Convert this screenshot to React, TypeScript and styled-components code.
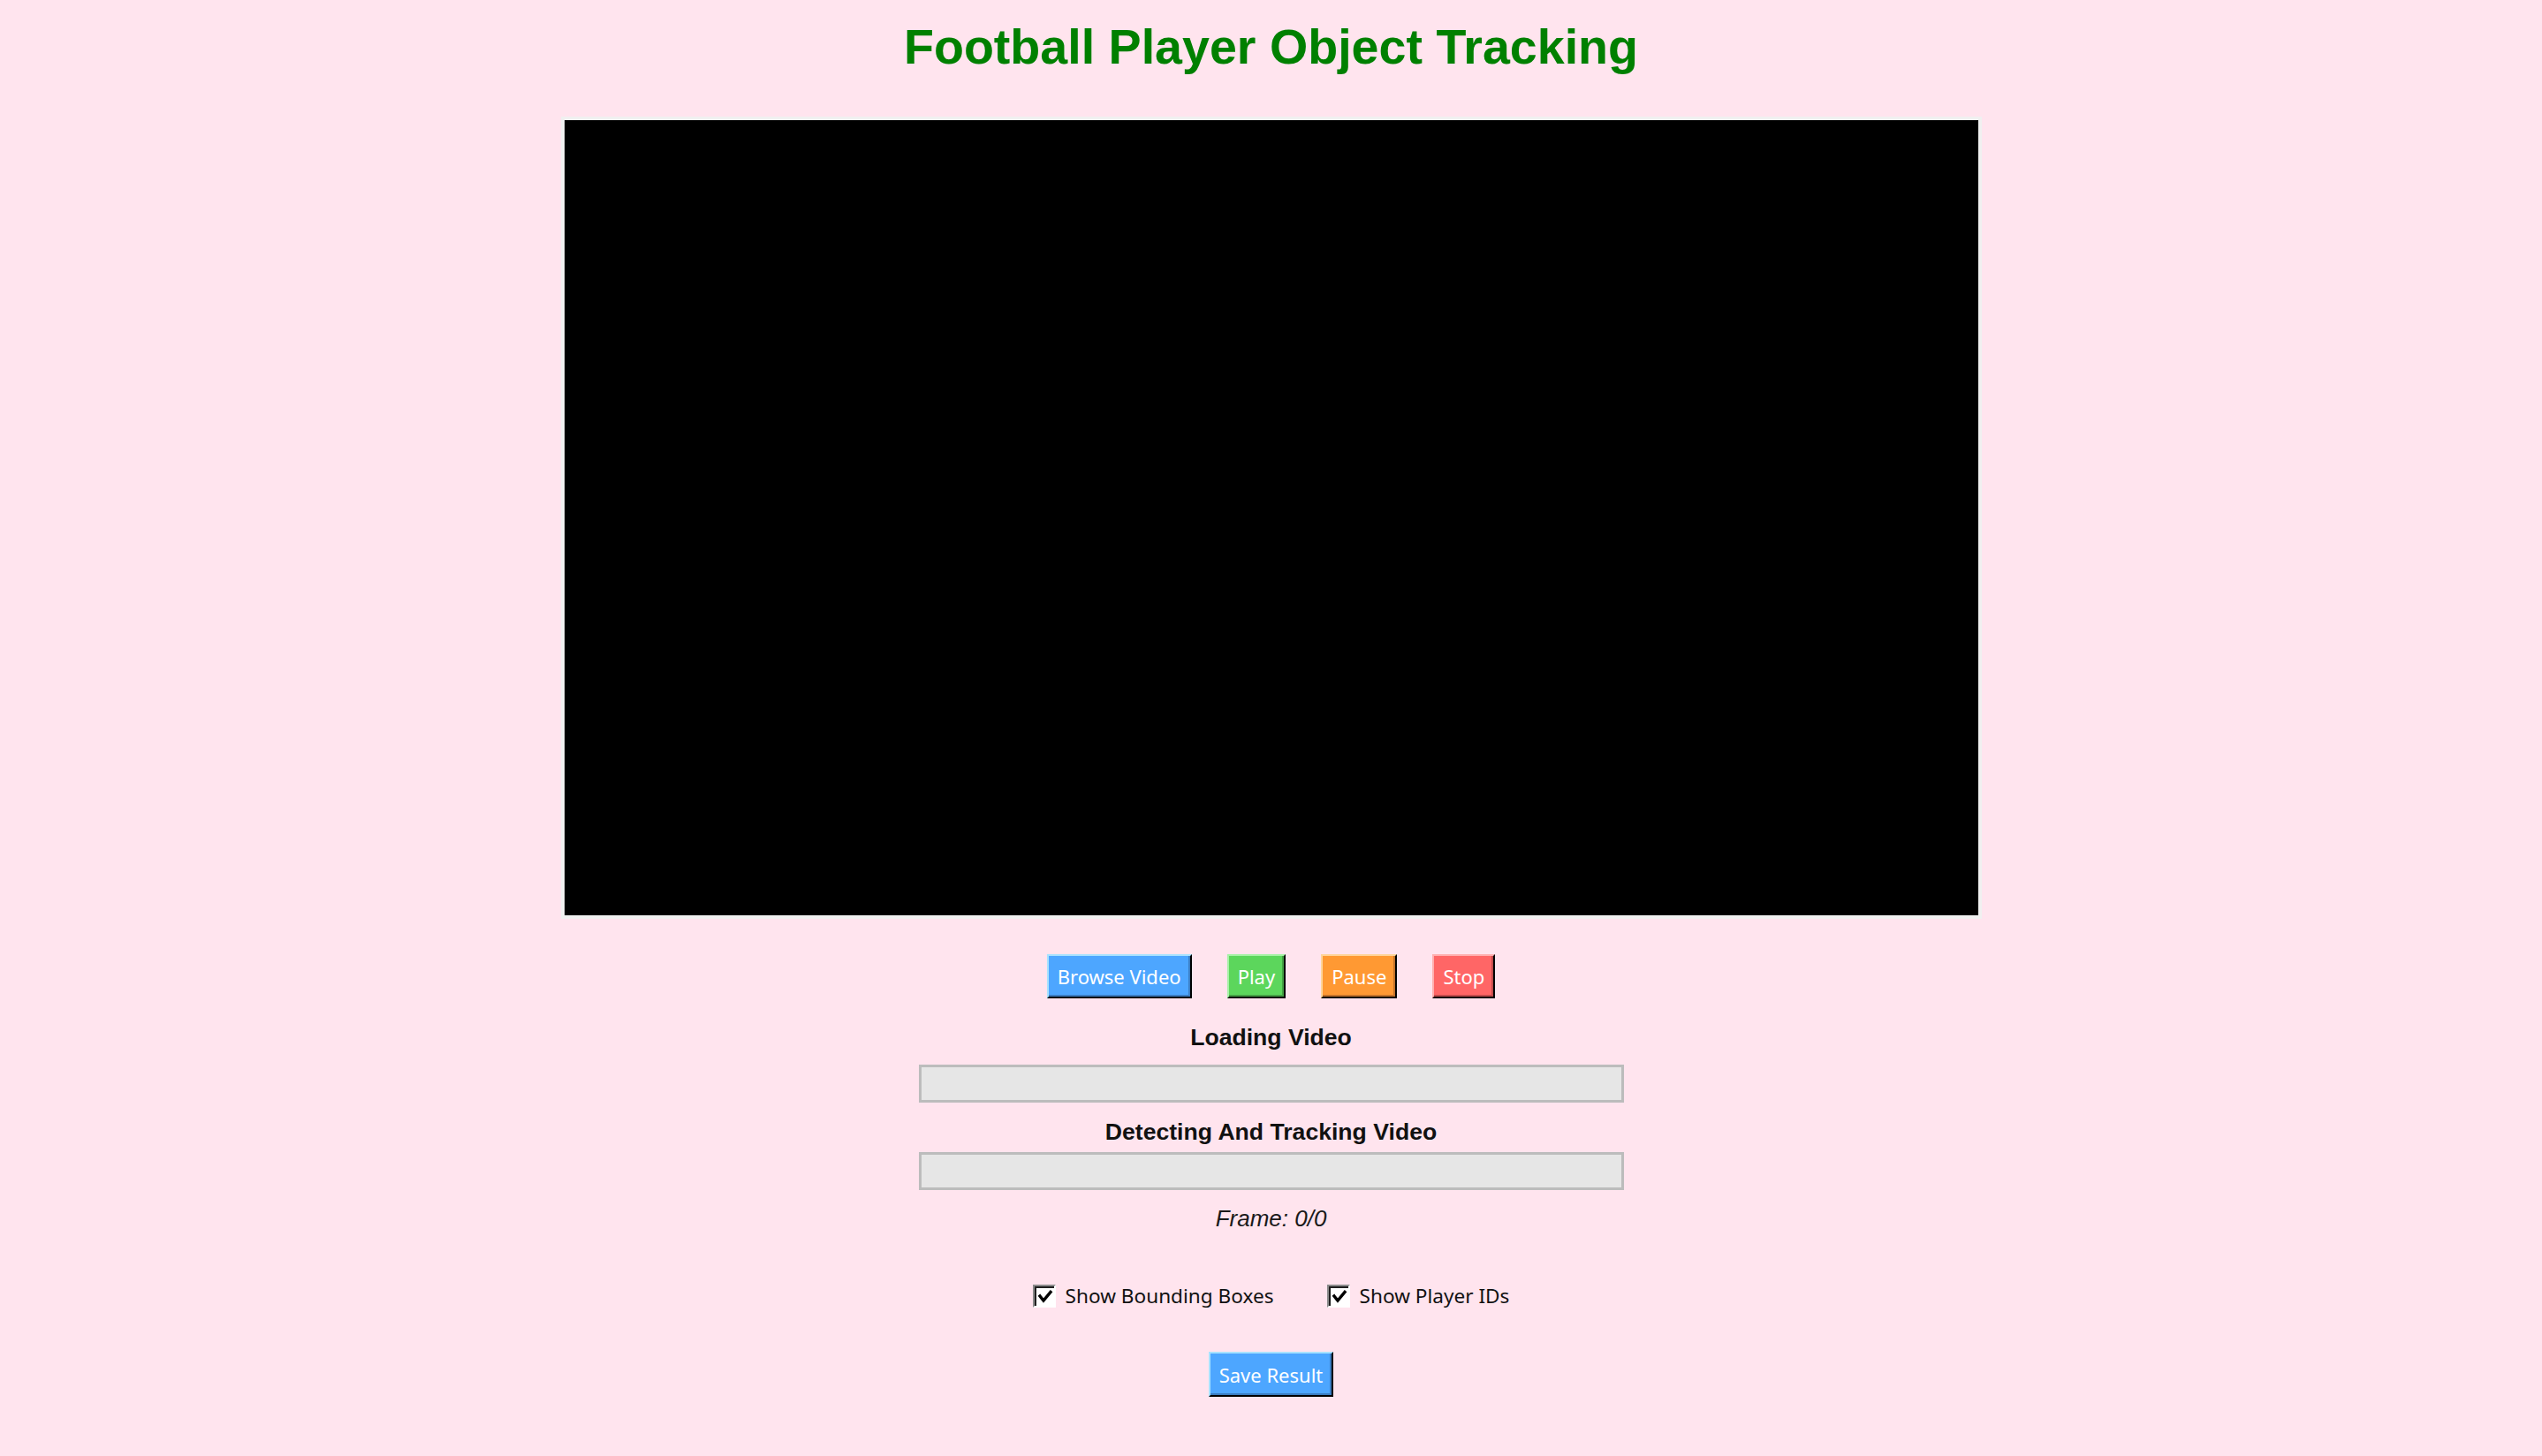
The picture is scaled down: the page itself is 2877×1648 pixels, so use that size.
import React from "react";
import styled, { createGlobalStyle } from "styled-components";

const GlobalStyle = createGlobalStyle`
  html, body {
    margin: 0;
    padding: 0;
    background: #ffe4ee;
    overflow: hidden;
  }
`;

const Page = styled.div`
  height: 100vh;
  background: #ffe4ee;
  display: flex;
  flex-direction: column;
  align-items: center;
  padding-top: 21px;
  box-sizing: border-box;
`;

const Title = styled.h1`
  margin: 0;
  font-family: "Liberation Sans", Arial, sans-serif;
  font-weight: 700;
  font-size: 55.6px;
  line-height: 64px;
  color: #008000;
`;

const VideoFrame = styled.div`
  margin-top: 47px;
  width: 1600px;
  height: 900px;
  background: #000;
  border: 4px solid #f0f0f0;
`;

const ButtonRow = styled.div`
  margin-top: 40px;
  display: flex;
  gap: 40px;
`;

type Tone = { base: string; light: string; dark: string };

const tones: Record<string, Tone> = {
  blue: { base: "#4da6ff", light: "#a8e2ff", dark: "#3a7dc2" },
  green: { base: "#5cd65c", light: "#a6f2a6", dark: "#44a044" },
  orange: { base: "#ff9933", light: "#ffd59a", dark: "#c4732a" },
  red: { base: "#ff6666", light: "#ffb0b0", dark: "#c24c4c" },
};

const TkButton = styled.button<{ $tone: keyof typeof tones }>`
  box-sizing: border-box;
  height: 50px;
  margin: 0;
  padding: 0 10px;
  display: flex;
  align-items: center;
  justify-content: center;
  background: ${(p) => tones[p.$tone].base};
  border-style: solid;
  border-width: 2px;
  border-color: ${(p) => tones[p.$tone].light} #000 #000 ${(p) => tones[p.$tone].light};
  box-shadow: inset -2px -2px 0 ${(p) => tones[p.$tone].dark};
  color: #fff;
  font-family: "Noto Sans", "Open Sans", sans-serif;
  font-size: 22px;
  line-height: 1;
  cursor: pointer;
  border-radius: 0;
`;

const SectionLabel = styled.div<{ $gap: number }>`
  margin-top: ${(p) => p.$gap}px;
  font-family: "Liberation Sans", Arial, sans-serif;
  font-weight: 700;
  font-size: 26.6px;
  line-height: 32px;
  color: #111;
`;

const ProgressTrack = styled.div<{ $gap: number }>`
  margin-top: ${(p) => p.$gap}px;
  box-sizing: border-box;
  width: 798px;
  height: 43px;
  background: #e6e6e6;
  border: 3px solid #bcbcbc;
`;

const FrameText = styled.div`
  margin-top: 16px;
  font-family: "Liberation Sans", Arial, sans-serif;
  font-style: italic;
  font-size: 26px;
  line-height: 32px;
  color: #1a1a1a;
`;

const OptionsRow = styled.div`
  margin-top: 57px;
  display: flex;
  gap: 60px;
  align-items: center;
`;

const OptionLabel = styled.label`
  display: flex;
  align-items: center;
  gap: 11px;
  font-family: "Noto Sans", "Open Sans", sans-serif;
  font-size: 22.6px;
  line-height: 30px;
  color: #111;
  cursor: pointer;
`;

const CheckBox = styled.span`
  box-sizing: border-box;
  width: 26px;
  height: 26px;
  display: flex;
  align-items: center;
  justify-content: center;
  background: #fff;
  border-style: solid;
  border-width: 2px;
  border-color: #8a8a8a #fff #fff #8a8a8a;
  box-shadow: inset 2px 2px 0 #202020;
`;

const SaveButton = styled(TkButton)`
  margin-top: 48px;
  height: 51px;
`;

const Check = () => (
  <svg width="18" height="18" viewBox="0 0 18 18" style={{ marginLeft: 2, marginTop: 2 }}>
    <polyline points="3,8 7,13 15,3.5" fill="none" stroke="#000" strokeWidth="3.4" strokeLinecap="square" />
  </svg>
);

export default function App() {
  return (
    <>
      <GlobalStyle />
      <Page>
        <Title>Football Player Object Tracking</Title>
        <VideoFrame />
        <ButtonRow>
          <TkButton $tone="blue">Browse Video</TkButton>
          <TkButton $tone="green">Play</TkButton>
          <TkButton $tone="orange">Pause</TkButton>
          <TkButton $tone="red">Stop</TkButton>
        </ButtonRow>
        <SectionLabel $gap={28}>Loading Video</SectionLabel>
        <ProgressTrack $gap={15} />
        <SectionLabel $gap={17}>Detecting And Tracking Video</SectionLabel>
        <ProgressTrack $gap={7} />
        <FrameText>Frame: 0/0</FrameText>
        <OptionsRow>
          <OptionLabel>
            <CheckBox>
              <Check />
            </CheckBox>
            Show Bounding Boxes
          </OptionLabel>
          <OptionLabel>
            <CheckBox>
              <Check />
            </CheckBox>
            Show Player IDs
          </OptionLabel>
        </OptionsRow>
        <SaveButton $tone="blue">Save Result</SaveButton>
      </Page>
    </>
  );
}
